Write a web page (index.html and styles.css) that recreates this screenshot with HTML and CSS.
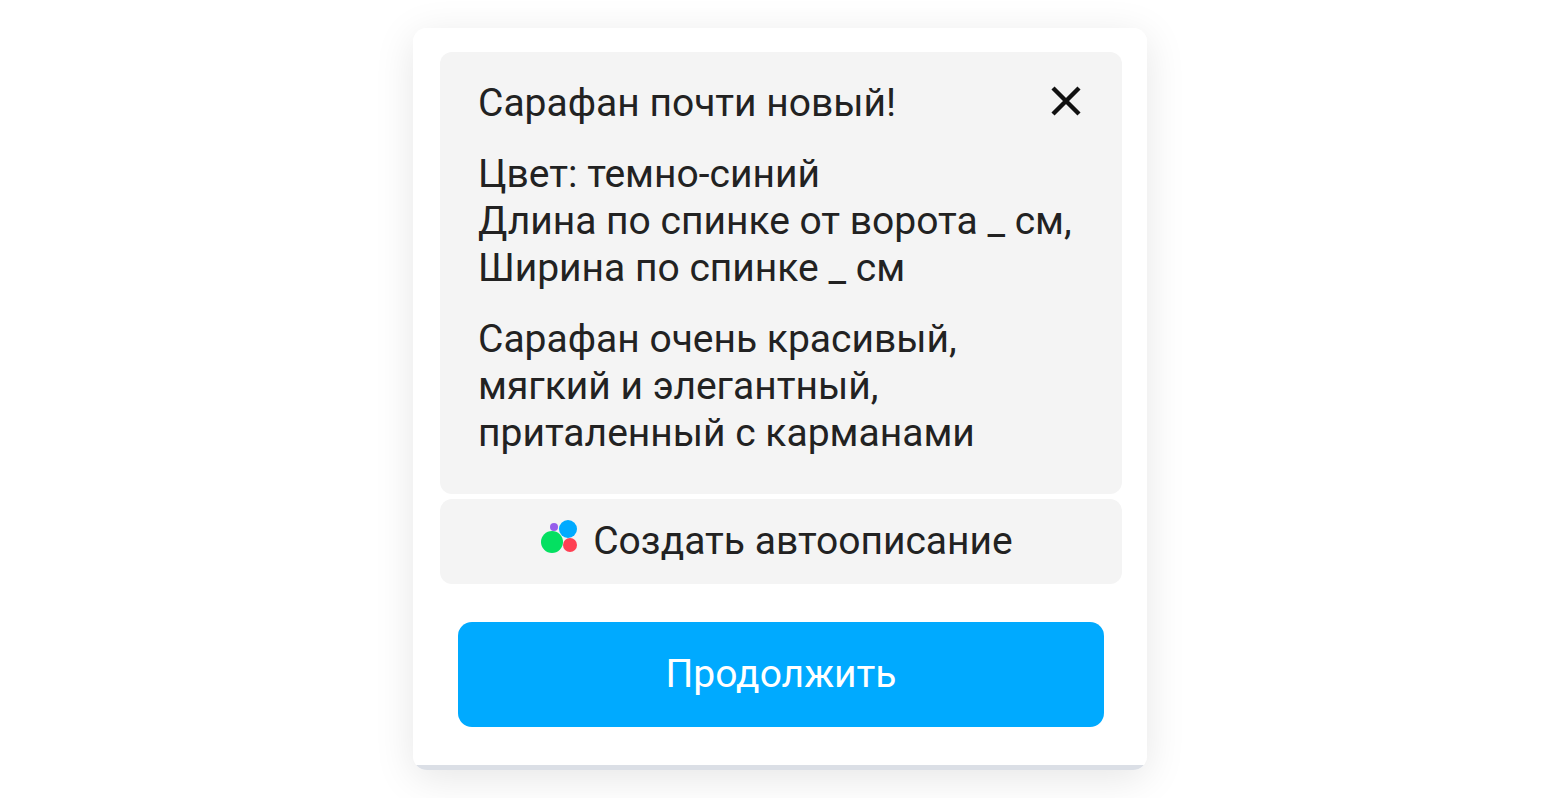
FILE: index.html
```html
<!DOCTYPE html>
<html lang="ru">
<head>
    <meta charset="UTF-8">
    <meta name="viewport" content="width=device-width, initial-scale=1.0">
    <title>Описание товара</title>
    <link rel="stylesheet" href="styles.css">
</head>
<body>

<main class="card">
    <section class="description">
        <p>Сарафан почти новый!</p>
        <p>Цвет: темно-синий<br>Длина по спинке от ворота _ см,<br>Ширина по спинке _ см</p>
        <p>Сарафан очень красивый,<br>мягкий и элегантный,<br>приталенный с карманами</p>
        <button class="close" type="button" aria-label="Очистить">
            <svg width="32" height="32" viewBox="0 0 32 32" aria-hidden="true">
                <path d="M3 3 L29 29 M29 3 L3 29" fill="none" stroke="#111" stroke-width="4.4"/>
            </svg>
        </button>
    </section>

    <button class="auto" type="button">
        <svg width="36" height="34" viewBox="0 0 36 34" aria-hidden="true">
            <circle cx="13" cy="7" r="4" fill="#965eeb"/>
            <circle cx="27" cy="9" r="9" fill="#0af"/>
            <circle cx="11" cy="22" r="11" fill="#04e061"/>
            <circle cx="29" cy="25" r="7" fill="#ff4053"/>
        </svg>
        Создать автоописание
    </button>

    <button class="continue" type="button">Продолжить</button>
</main>

</body>
</html>
```
FILE: styles.css
```css
body {
    margin: 0;
    padding: 28px 16px;
    background-color: white;
    color: #222;
    font-family: Roboto, Arial, sans-serif;
    font-size: 39px;
    line-height: 47px;
}
.card {
    display: flex;
    flex-direction: column;
    box-sizing: border-box;
    max-width: 734px;
    margin: 0 auto;
    padding: 24px 25px 43px 27px;
    /* grey strip along the bottom edge */
    background: linear-gradient(to top, #dbdfe6 5px, white 5px);
    border-radius: 14px;
    box-shadow: 0 8px 40px rgba(0, 0, 0, 0.1);
}
.description {
    position: relative;
    padding: 28px 38px 37px;
    background: #f4f4f4;
    border-radius: 12px;
}
.description p {
    margin: 0 0 24px;
}
.description p:last-of-type {
    margin-bottom: 0;
}
button {
    border: none;
    font: inherit;
    color: inherit;
    cursor: pointer;
}
.close {
    position: absolute;
    top: 33px;
    right: 40px;
    display: flex;
    padding: 0;
    background: none;
}
.auto {
    display: flex;
    justify-content: center;
    align-items: baseline;
    gap: 16px;
    margin-top: 5px;
    padding: 19px 24px 19px 16px;
    background: #f4f4f4;
    border-radius: 12px;
}
.continue {
    margin: 38px 18px 0;
    padding: 29px 16px;
    background: #0af;
    color: white;
    border-radius: 14px;
}
```
